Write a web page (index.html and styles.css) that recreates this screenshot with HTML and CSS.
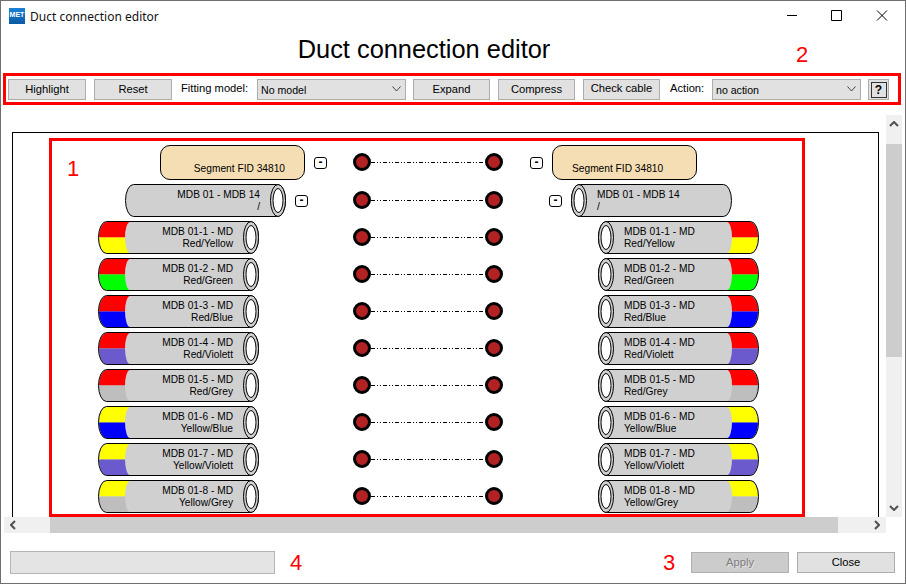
FILE: index.html
```html
<!DOCTYPE html>
<html lang="en">

<head>
    <meta charset="UTF-8">
    <title>Duct connection editor</title>
    <link rel="stylesheet" href="styles.css">
</head>

<body>
    <!-- Cable drawing, the colours come from --top and --bottom -->
    <svg class="defs" width="0" height="0">
        <symbol id="cable" viewBox="0 0 161 33">
            <path class="cable-fill" d="M8.5 .5H153a7.5 16 0 0 1 0 32H8.5a8 16 0 0 1 0-32z" />
            <path class="band-top" d="M32 1H8.5A8 15.5 0 0 0 1 16.5H27A5 15.5 0 0 1 32 1z" />
            <path class="band-bottom" d="M27 16.5H1A8 15.5 0 0 0 8.5 32H32A5 15.5 0 0 1 27 16.5z" />
            <path class="cable-line" d="M8.5 .5H153a7.5 16 0 0 1 0 32H8.5a8 16 0 0 1 0-32z" />
            <ellipse class="cable-ring" cx="153" cy="16.5" rx="7.5" ry="16" />
            <ellipse class="cable-hole" cx="153" cy="16.5" rx="5" ry="12" />
        </symbol>
        <symbol id="link" viewBox="0 0 176 18">
            <line class="link-line" x1="31" y1="9.5" x2="145" y2="9.5" />
            <circle class="link-dot" cx="22" cy="9" r="7.5" />
            <circle class="link-dot" cx="154" cy="9" r="7.5" />
        </symbol>
    </svg>

    <div class="window">
        <div class="titlebar">
            <span class="app-icon">MET</span>
            <span class="title-text">Duct connection editor</span>
            <div class="window-controls">
                <svg width="12" height="12" viewBox="0 0 12 12"><path d="M1 5.5H11" /></svg>
                <svg width="12" height="12" viewBox="0 0 12 12"><path d="M.5 .5H10.5V10.5H.5z" /></svg>
                <svg width="12" height="12" viewBox="0 0 12 12"><path d="M1 .5L11 10.5M11 .5L1 10.5" /></svg>
            </div>
        </div>

        <h1 class="heading">Duct connection editor</h1>

        <div class="toolbar">
            <button class="btn btn-highlight">Highlight</button>
            <button class="btn btn-reset">Reset</button>
            <span class="tool-label label-fitting">Fitting model:</span>
            <div class="combo combo-fitting">
                <span>No model</span>
                <svg width="9" height="6" viewBox="0 0 9 6"><path d="M.5 .5L4.5 5L8.5 .5" /></svg>
            </div>
            <button class="btn btn-expand">Expand</button>
            <button class="btn btn-compress">Compress</button>
            <button class="btn btn-check">Check cable</button>
            <span class="tool-label label-action">Action:</span>
            <div class="combo combo-action">
                <span>no action</span>
                <svg width="9" height="6" viewBox="0 0 9 6"><path d="M.5 .5L4.5 5L8.5 .5" /></svg>
            </div>
            <button class="btn btn-help"><span>?</span></button>
        </div>

        <div class="scroll-area">
            <div class="viewport">
                <div class="canvas">
                    <div class="row row-segment">
                        <div class="side side-left">
                            <div class="segment">Segment FID 34810</div>
                            <button class="toggle">-</button>
                        </div>
                        <svg class="link" width="176" height="18"><use href="#link" /></svg>
                        <div class="side side-right">
                            <button class="toggle">-</button>
                            <div class="segment">Segment FID 34810</div>
                        </div>
                    </div>

                    <div class="row row-duct">
                        <div class="side side-left">
                            <div class="cable"><svg width="161" height="33"><use href="#cable" /></svg><p>MDB 01 - MDB 14<br>/</p></div>
                            <button class="toggle">-</button>
                        </div>
                        <svg class="link" width="176" height="18"><use href="#link" /></svg>
                        <div class="side side-right">
                            <button class="toggle">-</button>
                            <div class="cable"><svg width="161" height="33"><use href="#cable" /></svg><p>MDB 01 - MDB 14<br>/</p></div>
                        </div>
                    </div>

                    <div class="row row-fibre">
                        <div class="side side-left">
                            <div class="cable top-red bottom-yellow"><svg width="161" height="33"><use href="#cable" /></svg><p>MDB 01-1 - MD<br>Red/Yellow</p></div>
                        </div>
                        <svg class="link" width="176" height="18"><use href="#link" /></svg>
                        <div class="side side-right">
                            <div class="cable top-red bottom-yellow"><svg width="161" height="33"><use href="#cable" /></svg><p>MDB 01-1 - MD<br>Red/Yellow</p></div>
                        </div>
                    </div>

                    <div class="row row-fibre">
                        <div class="side side-left">
                            <div class="cable top-red bottom-green"><svg width="161" height="33"><use href="#cable" /></svg><p>MDB 01-2 - MD<br>Red/Green</p></div>
                        </div>
                        <svg class="link" width="176" height="18"><use href="#link" /></svg>
                        <div class="side side-right">
                            <div class="cable top-red bottom-green"><svg width="161" height="33"><use href="#cable" /></svg><p>MDB 01-2 - MD<br>Red/Green</p></div>
                        </div>
                    </div>

                    <div class="row row-fibre">
                        <div class="side side-left">
                            <div class="cable top-red bottom-blue"><svg width="161" height="33"><use href="#cable" /></svg><p>MDB 01-3 - MD<br>Red/Blue</p></div>
                        </div>
                        <svg class="link" width="176" height="18"><use href="#link" /></svg>
                        <div class="side side-right">
                            <div class="cable top-red bottom-blue"><svg width="161" height="33"><use href="#cable" /></svg><p>MDB 01-3 - MD<br>Red/Blue</p></div>
                        </div>
                    </div>

                    <div class="row row-fibre">
                        <div class="side side-left">
                            <div class="cable top-red bottom-violet"><svg width="161" height="33"><use href="#cable" /></svg><p>MDB 01-4 - MD<br>Red/Violett</p></div>
                        </div>
                        <svg class="link" width="176" height="18"><use href="#link" /></svg>
                        <div class="side side-right">
                            <div class="cable top-red bottom-violet"><svg width="161" height="33"><use href="#cable" /></svg><p>MDB 01-4 - MD<br>Red/Violett</p></div>
                        </div>
                    </div>

                    <div class="row row-fibre">
                        <div class="side side-left">
                            <div class="cable top-red bottom-grey"><svg width="161" height="33"><use href="#cable" /></svg><p>MDB 01-5 - MD<br>Red/Grey</p></div>
                        </div>
                        <svg class="link" width="176" height="18"><use href="#link" /></svg>
                        <div class="side side-right">
                            <div class="cable top-red bottom-grey"><svg width="161" height="33"><use href="#cable" /></svg><p>MDB 01-5 - MD<br>Red/Grey</p></div>
                        </div>
                    </div>

                    <div class="row row-fibre">
                        <div class="side side-left">
                            <div class="cable top-yellow bottom-blue"><svg width="161" height="33"><use href="#cable" /></svg><p>MDB 01-6 - MD<br>Yellow/Blue</p></div>
                        </div>
                        <svg class="link" width="176" height="18"><use href="#link" /></svg>
                        <div class="side side-right">
                            <div class="cable top-yellow bottom-blue"><svg width="161" height="33"><use href="#cable" /></svg><p>MDB 01-6 - MD<br>Yellow/Blue</p></div>
                        </div>
                    </div>

                    <div class="row row-fibre">
                        <div class="side side-left">
                            <div class="cable top-yellow bottom-violet"><svg width="161" height="33"><use href="#cable" /></svg><p>MDB 01-7 - MD<br>Yellow/Violett</p></div>
                        </div>
                        <svg class="link" width="176" height="18"><use href="#link" /></svg>
                        <div class="side side-right">
                            <div class="cable top-yellow bottom-violet"><svg width="161" height="33"><use href="#cable" /></svg><p>MDB 01-7 - MD<br>Yellow/Violett</p></div>
                        </div>
                    </div>

                    <div class="row row-fibre">
                        <div class="side side-left">
                            <div class="cable top-yellow bottom-grey"><svg width="161" height="33"><use href="#cable" /></svg><p>MDB 01-8 - MD<br>Yellow/Grey</p></div>
                        </div>
                        <svg class="link" width="176" height="18"><use href="#link" /></svg>
                        <div class="side side-right">
                            <div class="cable top-yellow bottom-grey"><svg width="161" height="33"><use href="#cable" /></svg><p>MDB 01-8 - MD<br>Yellow/Grey</p></div>
                        </div>
                    </div>
                </div>
            </div>

            <div class="scrollbar scrollbar-v">
                <svg width="10" height="6" viewBox="0 0 10 6"><path d="M1 5L5 1L9 5" /></svg>
                <div class="thumb thumb-v"></div>
                <svg width="10" height="6" viewBox="0 0 10 6"><path d="M1 1L5 5L9 1" /></svg>
            </div>
            <div class="scrollbar scrollbar-h">
                <svg width="6" height="10" viewBox="0 0 6 10"><path d="M5 1L1 5L5 9" /></svg>
                <div class="thumb thumb-h"></div>
                <svg width="6" height="10" viewBox="0 0 6 10"><path d="M1 1L5 5L1 9" /></svg>
            </div>
        </div>

        <div class="footer">
            <div class="status-box"></div>
            <button class="btn btn-apply" disabled>Apply</button>
            <button class="btn btn-close">Close</button>
        </div>

        <!-- Red annotations drawn over the dialog -->
        <div class="mark mark-diagram"></div>
        <div class="mark mark-toolbar"></div>
        <span class="note note-1">1</span>
        <span class="note note-2">2</span>
        <span class="note note-3">3</span>
        <span class="note note-4">4</span>
    </div>
</body>

</html>
```

FILE: styles.css
```css
body {
    margin: 0;
    font-family: "Liberation Sans", Arial, sans-serif;
    background-color: #fff;
}

.defs {
    position: absolute;
}

.window {
    position: relative;
    display: flex;
    flex-direction: column;
    box-sizing: border-box;
    width: 906px;
    height: 584px;
    border: 1px solid #6f6f6f;
    background-color: #fff;
    overflow: hidden;
}

/* Title bar */
.titlebar {
    display: flex;
    align-items: center;
    height: 30px;
    padding-left: 8px;
}

.app-icon {
    width: 16px;
    height: 16px;
    background: linear-gradient(#1b82d4, #0b5aa6);
    color: #fff;
    font-size: 7px;
    font-weight: bold;
    line-height: 13px;
    text-align: center;
}

.title-text {
    margin-left: 5px;
    font-family: "Noto Sans", sans-serif;
    font-size: 12px;
    color: #111;
}

.window-controls {
    display: flex;
    gap: 33px;
    margin-left: auto;
    margin-right: 17px;
}

.window-controls svg {
    fill: none;
    stroke: #000;
}

.heading {
    margin: 0;
    padding: 4px 0 16px;
    width: 846px;
    font-size: 25.4px;
    font-weight: normal;
    line-height: 28px;
    text-align: center;
}

/* Toolbar */
.toolbar {
    display: flex;
    height: 21px;
    margin-left: 7px;
}

.btn {
    box-sizing: border-box;
    height: 21px;
    padding: 0 0 2px;
    border: 1px solid #adadad;
    background-color: #e1e1e1;
    color: #000;
    font-family: inherit;
    font-size: 11.2px;
}

.btn-highlight,
.btn-reset {
    width: 78px;
}

.btn-reset {
    margin-left: 8px;
}

.btn-expand,
.btn-compress,
.btn-check {
    width: 77px;
    margin-left: 8px;
}

.btn-expand {
    margin-left: 7px;
}

.btn-check {
    padding-bottom: 4px;
}

.tool-label {
    font-size: 11.2px;
    line-height: 18px;
}

.label-fitting {
    margin-left: 9px;
    width: 76px;
}

.label-action {
    margin-left: 10px;
    width: 42px;
}

.combo {
    display: flex;
    align-items: center;
    justify-content: space-between;
    box-sizing: border-box;
    width: 149px;
    height: 21px;
    padding: 0 4px 0 3px;
    border: 1px solid #adadad;
    background-color: #e1e1e1;
    font-size: 10.6px;
}

.combo svg {
    margin-bottom: 1px;
    fill: none;
    stroke: #444;
}

.btn-help {
    display: flex;
    align-items: center;
    justify-content: center;
    width: 21px;
    margin-left: 7px;
    padding: 0;
}

.btn-help span {
    box-sizing: border-box;
    width: 16px;
    height: 16px;
    border: 1px solid #333;
    font-size: 12px;
    font-weight: bold;
    line-height: 14px;
}

/* Scrolled diagram */
.scroll-area {
    display: grid;
    grid-template-columns: 882px 16px;
    grid-template-rows: 402px 16px;
    margin: 15px 0 0 3px;
}

.viewport {
    overflow: hidden;
}

.canvas {
    box-sizing: border-box;
    display: flex;
    flex-direction: column;
    gap: 4px;
    width: 867px;
    margin: 17px 0 0 8px;
    padding: 12px 0 40px;
    border: 1px solid #000;
    background-color: #fff;
}

.row {
    display: flex;
    align-items: center;
}

.side {
    display: flex;
    align-items: center;
    gap: 9px;
}

.side-left {
    box-sizing: border-box;
    width: 327px;
}

.row-segment .side-left {
    padding-left: 147px;
}

.row-duct .side-left {
    padding-left: 112px;
}

.row-fibre .side-left {
    padding-left: 85px;
}

.row-segment .side-right {
    padding-left: 14px;
}

.row-duct .side-right {
    padding-left: 33px;
}

.row-fibre .side-right {
    padding-left: 82px;
}

.link {
    flex: none;
    margin-bottom: 1px;
}

.link-line {
    stroke: #000;
    stroke-dasharray: 4 2 1 2 1 2;
}

.link-dot {
    fill: #b22222;
    stroke: #000;
    stroke-width: 3;
}

.toggle {
    box-sizing: border-box;
    width: 13px;
    height: 12px;
    padding: 0 0 2px;
    border: 1px solid #000;
    border-radius: 3px;
    background-color: #fff;
    font-family: inherit;
    font-size: 12px;
    font-weight: bold;
    line-height: 8px;
}

.segment {
    box-sizing: border-box;
    width: 145px;
    height: 35px;
    padding: 16px 19px 0 0;
    border: 1px solid #000;
    border-radius: 10px;
    background-color: #f5deb3;
    font-size: 10.2px;
    line-height: 13px;
    text-align: right;
}

.side-right .segment {
    padding: 16px 0 0 19px;
    text-align: left;
}

/* Cable, the svg and the label share one grid cell */
.cable {
    --top: #d0d0d0;
    --bottom: #d0d0d0;
    display: grid;
    width: 161px;
    height: 33px;
}

.cable > * {
    grid-area: 1 / 1;
}

.cable p {
    position: relative;
    margin: 0;
    padding: 5px 26px 0 0;
    font-size: 10.2px;
    line-height: 12px;
    text-align: right;
}

.side-right .cable svg {
    transform: scaleX(-1);
}

.side-right .cable p {
    padding: 5px 0 0 26px;
    text-align: left;
}

.cable-fill {
    fill: #d0d0d0;
}

.cable-line {
    fill: none;
    stroke: #000;
}

.cable-ring {
    fill: #d0d0d0;
    stroke: #000;
}

.cable-hole {
    fill: #fff;
    stroke: #000;
}

.band-top {
    fill: var(--top);
}

.band-bottom {
    fill: var(--bottom);
}

.top-red {
    --top: #f00;
}

.top-yellow {
    --top: #ff0;
}

.bottom-yellow {
    --bottom: #ff0;
}

.bottom-green {
    --bottom: #0f0;
}

.bottom-blue {
    --bottom: #00f;
}

.bottom-violet {
    --bottom: #6a5acd;
}

.bottom-grey {
    --bottom: #bebebe;
}

/* Scrollbars */
.scrollbar {
    display: flex;
    align-items: center;
    justify-content: space-between;
    background-color: #f0f0f0;
}

.scrollbar svg {
    flex: none;
    fill: none;
    stroke: #505050;
    stroke-width: 2;
}

.scrollbar-v {
    flex-direction: column;
    padding: 6px 0;
}

.scrollbar-h {
    grid-column: 1;
    padding: 0 6px;
}

.thumb {
    background-color: #cdcdcd;
}

.thumb-v {
    width: 100%;
    height: 213px;
    margin-top: 17px;
    margin-bottom: auto;
}

.thumb-h {
    height: 100%;
    width: 788px;
    margin-left: 34px;
    margin-right: auto;
}

/* Bottom bar */
.footer {
    display: flex;
    align-items: center;
    margin: 18px 0 0 9px;
}

.status-box {
    box-sizing: border-box;
    width: 265px;
    height: 23px;
    border: 1px solid #b5b5b5;
    background-color: #e4e4e4;
}

.btn-apply,
.btn-close {
    width: 98px;
}

.btn-apply {
    margin-left: 416px;
    background-color: #ccc;
    border-color: #b0b0b0;
    color: #7d7d7d;
    text-shadow: 1px 1px 0 #e4e4e4;
}

.btn-close {
    margin-left: 8px;
}

/* Annotations */
.mark {
    position: absolute;
    box-sizing: border-box;
    border: 3px solid #f00;
}

.mark-diagram {
    left: 48px;
    top: 137px;
    width: 756px;
    height: 379px;
}

.mark-toolbar {
    left: 2px;
    top: 72px;
    width: 898px;
    height: 32px;
}

.note {
    position: absolute;
    color: #f00;
    font-size: 22px;
    line-height: 22px;
}

.note-1 {
    left: 66px;
    top: 157px;
}

.note-2 {
    left: 795px;
    top: 43px;
}

.note-3 {
    left: 662px;
    top: 551px;
}

.note-4 {
    left: 289px;
    top: 551px;
}
```
